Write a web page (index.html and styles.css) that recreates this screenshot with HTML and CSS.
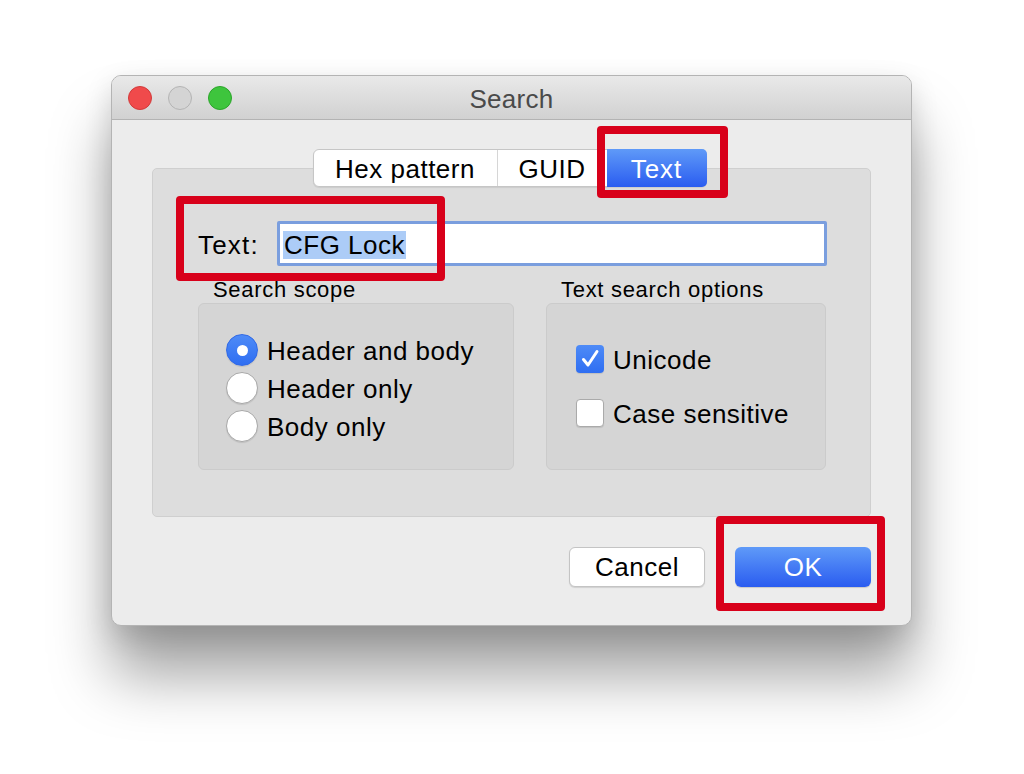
FILE: index.html
```html
<!DOCTYPE html>
<html>
<head>
<meta charset="utf-8">
<title>Search</title>
<link rel="stylesheet" href="styles.css">
</head>
<body>
<div class="window">
  <div class="titlebar">
    <div class="lights">
      <span class="light red"></span>
      <span class="light gray"></span>
      <span class="light green"></span>
    </div>
    <div class="title">Search</div>
    <div></div>
  </div>
  <div class="content">
    <div class="tabbox">
      <div class="segment">
        <div class="seg seg-hex">Hex pattern</div>
        <div class="seg seg-guid">GUID</div>
        <div class="seg seg-text active">Text</div>
      </div>
      <div class="textrow">
        <label class="textlabel">Text:</label>
        <div class="input"><span class="sel">CFG Lock</span></div>
      </div>
      <div class="groups">
        <div class="group group-scope">
          <div class="glabel">Search scope</div>
          <div class="gbox scope-box">
            <div class="radiorow"><span class="radio checked"></span><span>Header and body</span></div>
            <div class="radiorow"><span class="radio"></span><span>Header only</span></div>
            <div class="radiorow"><span class="radio"></span><span>Body only</span></div>
          </div>
        </div>
        <div class="group group-opts">
          <div class="glabel">Text search options</div>
          <div class="gbox opts-box">
            <div class="checkrow"><span class="check checked"><svg width="28" height="28" viewBox="0 0 28 28"><path d="M7.5 14.5 L12 20 L21 6.5" fill="none" stroke="#fff" stroke-width="3" stroke-linecap="round" stroke-linejoin="round"/></svg></span><span>Unicode</span></div>
            <div class="checkrow"><span class="check"></span><span>Case sensitive</span></div>
          </div>
        </div>
      </div>
    </div>
    <div class="buttons">
      <div class="btn cancel">Cancel</div>
      <div class="btn ok">OK</div>
    </div>
  </div>
</div>
<div class="mark mark-tab"></div>
<div class="mark mark-label"></div>
<div class="mark mark-ok"></div>
</body>
</html>
```

FILE: styles.css
```css
* { box-sizing: border-box; }
html, body { margin: 0; padding: 0; background: #ffffff; }
body {
  position: relative;
  width: 1024px;
  height: 774px;
  overflow: hidden;
  font-family: "Liberation Sans", Arial, sans-serif;
  color: #000;
  letter-spacing: 0.5px;
}
.window {
  margin: 75px 0 0 111px;
  width: 801px;
  height: 551px;
  border-radius: 10px;
  background: #ececec;
  border: 1px solid #b4b4b4;
  box-shadow: 0 50px 60px rgba(0,0,0,0.36), 0 10px 28px rgba(0,0,0,0.14);
  overflow: hidden;
}
.titlebar {
  height: 44px;
  display: grid;
  grid-template-columns: 1fr auto 1fr;
  align-items: center;
  background: linear-gradient(#e9e9e9, #d1d1d1);
  border-bottom: 1px solid #b3b3b3;
  padding-left: 16px;
}
.lights { display: flex; gap: 16px; }
.light {
  width: 24px; height: 24px; border-radius: 50%;
  display: block;
}
.red { background: #f04a4b; border: 1px solid #d23a3a; }
.gray { background: #d4d4d4; border: 1px solid #b4b4b4; }
.green { background: #3ec53d; border: 1px solid #2ba52a; }
.title {
  font-size: 26px;
  color: #4a4a4a;
  padding-right: 16px;
  padding-top: 3px;
  letter-spacing: 0.3px;
}
.content {
  padding: 48px 40px 0 40px;
}
.tabbox {
  height: 349px;
  background: #dddddd;
  border: 1px solid #cfcfcf;
  border-radius: 5px;
  display: flex;
  flex-direction: column;
  align-items: stretch;
}
.segment {
  align-self: center;
  margin-top: -20px;
  margin-left: -4px;
  display: flex;
  height: 38px;
  background: #fff;
  border: 1px solid #c6c6c6;
  border-radius: 6px;
  box-shadow: 0 1px 1px rgba(0,0,0,0.08);
  font-size: 26px;
}
.seg {
  display: flex;
  align-items: center;
  justify-content: center;
  height: 100%;
  padding-top: 2px;
}
.seg-hex { width: 184px; border-right: 1px solid #d6d6d6; }
.seg-guid { width: 109px; }
.seg-text { width: 100px; }
.seg.active {
  color: #fff;
  background: linear-gradient(#5f9af8, #2a5cf0);
  border-radius: 0 5px 5px 0;
  margin: -1px -1px -1px 0;
  height: 38px;
  letter-spacing: 1px;
}
.textrow {
  display: flex;
  align-items: center;
  margin-top: 34px;
  padding-left: 45px;
}
.textlabel {
  width: 79px;
  font-size: 26px;
  padding-top: 3px;
  letter-spacing: 1.2px;
}
.input {
  width: 550px;
  height: 45px;
  border: 3px solid #7a9ede;
  border-radius: 2px;
  background: #fff;
  display: flex;
  align-items: center;
  padding-left: 3px;
  padding-top: 2px;
  font-size: 26px;
}
.sel {
  background: #acccf7;
  line-height: 28px;
  padding: 0 1px;
}
.groups {
  display: flex;
  gap: 32px;
  padding-left: 45px;
  margin-top: 10px;
}
.glabel {
  font-size: 22px;
  line-height: 24px;
  padding-left: 15px;
  padding-top: 2px;
  margin-bottom: 1px;
  letter-spacing: 0.7px;
}
.gbox {
  height: 167px;
  background: #d5d5d5;
  border: 1px solid #cbcbcb;
  border-radius: 6px;
  font-size: 26px;
}
.scope-box { width: 316px; padding: 27px 0 0 27px; }
.opts-box { width: 280px; padding: 35px 0 0 29px; }
.radiorow {
  height: 38px;
  display: flex;
  align-items: center;
  gap: 9px;
}
.radiorow span:last-child, .checkrow span:last-child { padding-top: 2px; }
.radio {
  width: 32px; height: 32px; border-radius: 50%;
  background: #fff;
  border: 1px solid #a8a8a8;
  box-shadow: 0 1px 1px rgba(0,0,0,0.1);
  display: flex; align-items: center; justify-content: center;
  flex: none;
}
.radio.checked {
  background: linear-gradient(#4e8bf7, #2f6ef2);
  border-color: #3169e6;
}
.radio.checked::after {
  content: "";
  width: 11px; height: 11px; border-radius: 50%;
  background: #fff;
}
.checkrow {
  height: 40px;
  display: flex;
  align-items: center;
  gap: 9px;
  margin-bottom: 14px;
}
.check {
  width: 28px; height: 28px;
  border-radius: 4px;
  background: #fff;
  border: 1px solid #aaaaaa;
  box-shadow: 0 1px 1px rgba(0,0,0,0.1);
  flex: none;
  display: block;
}
.check.checked {
  background: linear-gradient(#4e8bf7, #2f6ef2);
  border: none;
}
.check svg { display: block; }
.buttons {
  display: flex;
  justify-content: flex-end;
  gap: 30px;
  margin-top: 30px;
}
.btn {
  width: 136px;
  height: 40px;
  border-radius: 6px;
  display: flex;
  align-items: center;
  justify-content: center;
  font-size: 26px;
}
.cancel {
  background: #fff;
  border: 1px solid #c4c4c4;
  box-shadow: 0 1px 1px rgba(0,0,0,0.12);
}
.ok {
  color: #fff;
  background: linear-gradient(#5f9af8, #2a5cf0);
  box-shadow: 0 1px 1px rgba(0,0,0,0.15);
}
.mark {
  position: absolute;
  border: 8px solid #d8001a;
  border-radius: 4px;
}
.mark-tab { left: 597px; top: 126px; width: 131px; height: 72px; }
.mark-label { left: 176px; top: 196px; width: 269px; height: 85px; }
.mark-ok { left: 716px; top: 516px; width: 169px; height: 95px; }
```
